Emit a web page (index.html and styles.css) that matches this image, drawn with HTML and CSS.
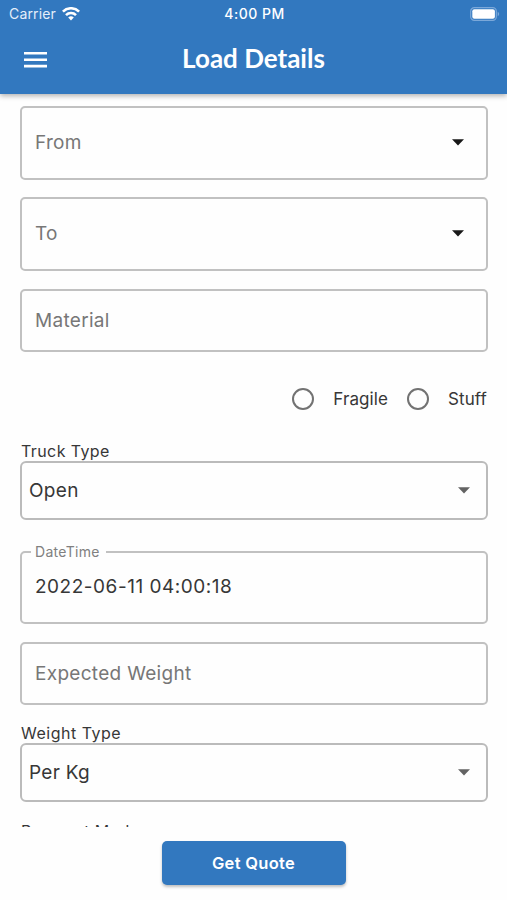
FILE: index.html
```html
<!DOCTYPE html>
<html lang="en">
<head>
<meta charset="utf-8">
<title>Load Details</title>
<link rel="stylesheet" href="styles.css">
</head>
<body>
<div class="screen">
  <header class="header">
    <div class="status">
      <div class="carrier"><span>Carrier</span>
        <svg width="18" height="14" viewBox="0 0 18 14" fill="none" stroke="#fff" stroke-width="2.6"><path d="M.9 4.6a11.5 11.5 0 0 1 16.2 0M4 8.1a7.1 7.1 0 0 1 10 0"/><path d="M9 13.4 6.2 10.6a4 4 0 0 1 5.6 0z" fill="#fff" stroke="none"/></svg>
      </div>
      <span class="clock">4:00 PM</span>
      <svg class="battery" width="30" height="14" viewBox="0 0 30 14"><rect x=".7" y=".7" width="25.6" height="12.6" rx="3.6" fill="none" stroke="#7ba8d9" stroke-width="1.2"/><rect x="2.3" y="2.3" width="22.6" height="9.4" rx="2" fill="#fff"/><path d="M27.7 4.8q1.5.7 1.5 2.2t-1.5 2.2z" fill="#7ba8d9"/></svg>
    </div>
    <div class="toolbar">
      <svg class="menu" width="23" height="16" viewBox="0 0 23 16" fill="#fff"><path d="M0 0h23v2.6H0zM0 6.4h23V9H0zM0 12.8h23v2.6H0z"/></svg>
      <h1 class="title">Load Details</h1>
    </div>
  </header>
  <main class="form">
    <div class="field tall first"><span class="hint">From</span><svg class="arrow dark" width="12" height="7" viewBox="0 0 12 7"><path d="M0 .3h12L6 6.4z"/></svg></div>
    <div class="field tall"><span class="hint">To</span><svg class="arrow dark" width="12" height="7" viewBox="0 0 12 7"><path d="M0 .3h12L6 6.4z"/></svg></div>
    <div class="field input"><span class="hint">Material</span></div>
    <div class="radios">
      <span class="radio"></span><span class="radio-label">Fragile</span>
      <span class="radio second"></span><span class="radio-label">Stuff</span>
    </div>
    <div class="label">Truck Type</div>
    <div class="field select"><span class="value">Open</span><svg class="arrow" width="12" height="7" viewBox="0 0 12 7"><path d="M0 .3h12L6 6.4z"/></svg></div>
    <div class="field date"><span class="legend">DateTime</span><span class="value stamp">2022-06-11 04:00:18</span></div>
    <div class="field input weight"><span class="hint">Expected Weight</span></div>
    <div class="label weight-label">Weight Type</div>
    <div class="field select"><span class="value">Per Kg</span><svg class="arrow" width="12" height="7" viewBox="0 0 12 7"><path d="M0 .3h12L6 6.4z"/></svg></div>
    <div class="label payment">Payment Mode</div>
  </main>
  <footer class="footer"><button class="quote">Get Quote</button></footer>
</div>
</body>
</html>
```
FILE: styles.css
```css
* { box-sizing: border-box; }
body { margin: 0; font-family: Inter, sans-serif; background: #fefefe; color: #373737; }
.screen { width: 507px; height: 900px; display: flex; flex-direction: column; overflow: hidden; }
.header { height: 94px; flex: none; background: #3278bf; color: #fff; box-shadow: 0 2px 5px rgba(0,0,0,.3); z-index: 1; }
.status { height: 27px; display: grid; grid-template-columns: 1fr auto 1fr; align-items: center; padding: 0 7px 0 9px; font-size: 14px; }
.carrier { display: flex; align-items: center; gap: 6px; color: #e4eefa; letter-spacing: .15px; }
.clock { font-weight: 500; letter-spacing: .5px; }
.battery { justify-self: end; }
.toolbar { height: 67px; display: grid; grid-template-columns: 1fr auto 1fr; padding: 0 24px; }
.menu { margin-top: 25px; }
.title { margin: 15px 0 0; font: 700 26px/32px Lato, sans-serif; letter-spacing: 0; }
.form { flex: none; height: 733px; padding: 12px 19px 0 20px; overflow: hidden; }
.field { border: 2px solid #c1c1c1; border-radius: 5px; display: flex; align-items: center; justify-content: space-between; font-size: 19px; letter-spacing: .3px; padding-left: 13px; }
.tall { height: 74px; margin-bottom: 17px; padding-right: 22px; }
.first { padding-bottom: 2px; }
.tall + .tall { margin-bottom: 18px; padding-bottom: 1px; }
.input { height: 63px; }
.hint { color: #777; }
.arrow { fill: #636363; }
.arrow.dark { fill: #181818; }
.radios { height: 94px; display: flex; align-items: center; justify-content: flex-end; font-size: 17px; letter-spacing: .1px; padding-right: 1px; }
.radio { width: 22px; height: 22px; border: 2px solid #727272; border-radius: 50%; margin-right: 19px; }
.radio.second { margin-left: 19px; }
.label { height: 15px; line-height: 10px; font-size: 16px; letter-spacing: .4px; padding-left: 1px; }
.select { height: 59px; padding: 0 16px 0 7px; border-color: #bbb; border-radius: 6px; }
.date { height: 73px; margin-top: 31px; position: relative; }
.legend { position: absolute; left: 9px; top: -10px; padding: 0 6px 0 4px; background: #fefefe; color: #808080; font-size: 14px; line-height: 18px; letter-spacing: .3px; }
.stamp { padding-bottom: 2px; letter-spacing: .52px; }
.weight { margin-top: 18px; }
.weight-label { margin-top: 23px; letter-spacing: .5px; }
.payment { margin-top: 24px; }
.footer { height: 73px; display: flex; justify-content: center; padding-top: 14px; background: #fefefe; }
.quote { width: 184px; height: 44px; border: 0; border-radius: 5px; background: #3278bf; color: #fff; font: 600 16.5px Inter, sans-serif; letter-spacing: .3px; box-shadow: 0 2px 3px rgba(0,0,0,.25); }
```
